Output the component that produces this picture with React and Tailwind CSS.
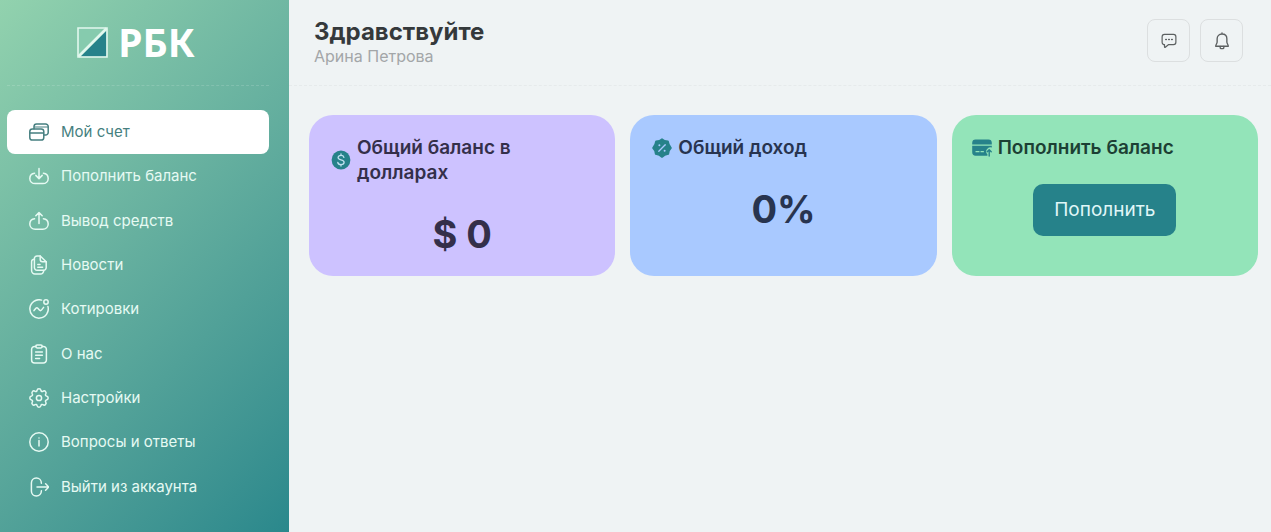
import React from "react";

function Icon({ children, className = "size-5" }) {
  return (
    <svg
      viewBox="0 0 20 20"
      fill="none"
      stroke="currentColor"
      strokeWidth="1.5"
      strokeLinecap="round"
      strokeLinejoin="round"
      aria-hidden="true"
      className={`${className} shrink-0`}
    >
      {children}
    </svg>
  );
}

const AccountIcon = () => (
  <Icon>
    <rect x="0.8" y="7" width="14" height="11" rx="2.6" />
    <path d="M1 11h13.400" />
    <path d="M5 6.800V4.600A2.600 2.600 0 0 1 7.600 2h9a2.600 2.600 0 0 1 2.600 2.600v5.800a2.600 2.600 0 0 1-2.600 2.600h-1.600" />
    <path d="M5.400 5h13.400" strokeWidth="1" />
  </Icon>
);

const TopUpIcon = () => (
  <Icon>
    <path d="M10 2.400v10M6.800 9.400l3.200 3.200 3.200-3.200" />
    <path d="M5.600 7.200a5.400 5.400 0 0 0-4.800 5.200c0 3 2.400 5.200 5.400 5.200h7.600c3 0 5.400-2.200 5.400-5.200a5.400 5.400 0 0 0-4.800-5.200" />
  </Icon>
);

const WithdrawIcon = () => (
  <Icon>
    <path d="M10 12.600V1.800M6.800 4.800 10 1.600l3.200 3.200" />
    <path d="M5.600 7.800a5.400 5.400 0 0 0-4.800 5.200c0 3 2.400 5.200 5.400 5.200h7.600c3 0 5.400-2.200 5.400-5.200a5.400 5.400 0 0 0-4.800-5.200" />
  </Icon>
);

const NewsIcon = () => (
  <Icon>
    <path d="M11.200 1H8a2.600 2.600 0 0 0-2.600 2.600v9A2.600 2.600 0 0 0 8 15.200h6.600a2.600 2.600 0 0 0 2.600-2.600V6.800z" />
    <path d="M11.200 1v3.600a2.200 2.200 0 0 0 2.200 2.200h3.800M8.800 9.400h2.200M8.800 12.200h4.800" />
    <path d="M5.400 4.200A2.600 2.600 0 0 0 2.600 6.800v8.800A3.400 3.400 0 0 0 6 19h5.400a3.400 3.400 0 0 0 3.300-3.600" />
  </Icon>
);

const QuotesIcon = () => (
  <Icon>
    <path d="M12.600 1.100A9.200 9.200 0 1 0 18.900 7.400" />
    <circle cx="17" cy="3" r="2.200" />
    <path d="m5 11.600 1.900-2.300c.6-.7 1.300-.7 1.900 0l1.600 1.800c.6.7 1.400.7 2 0l2.200-2.700" />
  </Icon>
);

const AboutIcon = () => (
  <Icon>
    <path d="M6.800 2.400H5.600a3 3 0 0 0-3 3V16a3 3 0 0 0 3 3h8.800a3 3 0 0 0 3-3V5.400a3 3 0 0 0-3-3h-1.200" />
    <rect x="6.800" y="0.900" width="6.400" height="3" rx="1.300" />
    <path d="M6.600 8h6.800M6.600 11.200h6.800M6.600 14.400h4" />
  </Icon>
);

const SettingsIcon = () => (
  <Icon>
    <circle cx="10" cy="10" r="2.600" />
    <path d="M8 2.500C8.200 1.300 9 .8 10 .8s1.800.5 2 1.700c.2 1 1 1.300 1.900.8 1-.7 1.900-.6 2.600.2.700.7.800 1.600.2 2.600-.6.900-.2 1.700.8 1.900 1.200.2 1.700 1 1.700 2s-.5 1.800-1.700 2c-1 .2-1.400 1-.8 1.900.6 1 .5 1.900-.2 2.600-.7.800-1.600.9-2.600.2-.9-.5-1.700-.2-1.900.8-.2 1.200-1 1.700-2 1.700s-1.800-.5-2-1.700c-.2-1-1-1.300-1.900-.8-1 .7-1.900.6-2.600-.2-.7-.7-.8-1.600-.2-2.600.6-.9.200-1.700-.8-1.900C1.300 11.800.8 11 .8 10s.5-1.800 1.700-2c1-.2 1.400-1 .8-1.900-.6-1-.5-1.900.2-2.600.7-.8 1.600-.9 2.600-.2.900.5 1.700.2 1.900-.8z" />
  </Icon>
);

const InfoIcon = () => (
  <Icon>
    <circle cx="10" cy="10" r="9.200" />
    <path d="M10 8.600V14M10 6v.1" />
  </Icon>
);

const LogoutIcon = () => (
  <Icon>
    <path d="M12.400 6.200C12.400 3.100 10.200 1 7.300 1 4.400 1 2.400 3.100 2.400 6v8c0 2.900 2 5 4.900 5 2.900 0 5.100-2.100 5.100-5.200" />
    <path d="M8 10h11.800M16.600 6.800 19.800 10l-3.200 3.200" />
  </Icon>
);

const DollarIcon = () => (
  <svg viewBox="0 0 20 20" fill="none" aria-hidden="true" className="size-5 shrink-0 text-[#26828a]">
    <circle cx="10" cy="10" r="9.400" fill="currentColor" />
    <path
      d="M12.900 7.300c-.3-1.200-1.400-1.900-2.900-1.900-1.700 0-2.900.9-2.900 2.200 0 1.400 1.200 1.900 2.900 2.300 1.800.4 3.100.9 3.100 2.400 0 1.400-1.300 2.300-3.100 2.300-1.700 0-2.900-.8-3.200-2.100M10 3.900v1.500M10 14.600v1.500"
      stroke="#bfe2f0"
      strokeWidth="1.300"
      strokeLinecap="round"
    />
  </svg>
);

const PercentIcon = () => (
  <svg viewBox="0 0 20 20" fill="none" aria-hidden="true" className="size-5 shrink-0 text-[#26828a]">
    <path
      d="M10 1.200 12.700 2.900l3.200.4.9 3.100L18.900 9.900l-2 2.800-.7 3.300-3.300.8L10 18.900l-2.900-2.100-3.300-.8-.7-3.300-2-2.800 2.100-3.500.9-3.100 3.200-.4z"
      fill="currentColor"
      stroke="currentColor"
      strokeWidth="1.800"
      strokeLinejoin="round"
    />
    <path d="m6.800 13.200 6.400-6.400" stroke="#a9c9ff" strokeWidth="1.300" strokeLinecap="round" />
    <circle cx="7.400" cy="7.200" r="1" fill="#a9c9ff" />
    <circle cx="12.600" cy="12.800" r="1" fill="#a9c9ff" />
  </svg>
);

const CardUpIcon = () => (
  <svg viewBox="0 0 20 20" fill="none" aria-hidden="true" className="size-5 shrink-0 text-[#26828a]">
    <path d="M3.600 1.400h12.800A3.400 3.400 0 0 1 19.800 4.800v1.600H.2V4.800a3.400 3.400 0 0 1 3.400-3.400z" fill="currentColor" />
    <path
      d="M.2 7.800h19.600v1.700a4.600 4.600 0 0 0-4.400 1.200c-1 1-1.600 2.600-1.200 3.900.2.800.8 1.200 1.200 1.400v1.700H3.600A3.400 3.400 0 0 1 .2 14.300z"
      fill="currentColor"
    />
    <path d="M4 13.700h3M9 13.700h2.400" stroke="#93e4b9" strokeWidth="1.200" strokeLinecap="round" />
    <path d="M17.200 18.100v-6M15.200 13.700l2-2 2 2" stroke="currentColor" strokeWidth="1.400" strokeLinecap="round" strokeLinejoin="round" />
  </svg>
);

const menu = [
  { label: "Мой счет", icon: AccountIcon, active: true },
  { label: "Пополнить баланс", icon: TopUpIcon },
  { label: "Вывод средств", icon: WithdrawIcon },
  { label: "Новости", icon: NewsIcon },
  { label: "Котировки", icon: QuotesIcon },
  { label: "О нас", icon: AboutIcon },
  { label: "Настройки", icon: SettingsIcon },
  { label: "Вопросы и ответы", icon: InfoIcon },
  { label: "Выйти из аккаунта", icon: LogoutIcon },
];

function Sidebar() {
  return (
    <aside className="flex w-[289px] shrink-0 flex-col bg-linear-135 from-[#92d2ae] to-[#2a888c] pr-5 pl-[7px]">
      <a
        href="#"
        className="flex h-[86px] items-center justify-center gap-2.5 border-b border-dashed border-white/15 pr-1 text-white"
      >
        <svg viewBox="0 0 31 31" aria-hidden="true" className="size-[31px] shrink-0">
          <path d="M1 1h29L1 30z" fill="#86cbae" />
          <path d="M3.500 29.500 29.500 3.500v26z" fill="#26828a" />
          <path d="M1 1h29v29H1z" fill="none" stroke="#e2f8ee" strokeWidth="1.600" />
          <path d="M1.500 29.500 29.500 1.500" stroke="#e2f8ee" strokeWidth="2.600" />
        </svg>
        <span className="pb-0.5 font-['Noto_Sans',sans-serif] text-[39px] leading-10 font-bold">РБК</span>
      </a>
      <nav className="mt-6">
        <ul className="grid h-[399px] auto-rows-fr">
          {menu.map(({ label, icon: ItemIcon, active }) => (
            <li key={label} className="grid">
              <a
                href="#"
                aria-current={active ? "page" : undefined}
                className={`flex items-center gap-3 rounded-lg pl-[22px] text-[15px] ${
                  active ? "bg-white text-[#467f80]" : "text-[#e6faf3]"
                }`}
              >
                <ItemIcon />
                {label}
              </a>
            </li>
          ))}
        </ul>
      </nav>
    </aside>
  );
}

function HeaderButton({ label, children }) {
  return (
    <button
      type="button"
      aria-label={label}
      className="flex size-[43px] items-center justify-center rounded-lg border border-[#dcdfe0] text-[#5c6061]"
    >
      {children}
    </button>
  );
}

function Header() {
  return (
    <header className="flex h-[86px] items-start justify-between border-b border-dashed border-[#e6eaeb] pt-[19px] pr-7 pl-[25px]">
      <div>
        <h1 className="text-2xl leading-[26px] font-bold text-[#35393b]">Здравствуйте</h1>
        <p className="text-base leading-[22px] text-[#a3a6a8]">Арина Петрова</p>
      </div>
      <div className="flex gap-2.5">
        <HeaderButton label="Сообщения">
          <Icon className="size-4">
            <path d="M4.400 1.800h11.200a3 3 0 0 1 3 3v6.800a3 3 0 0 1-3 3H9.200l-3.800 3.200c-.5.400-1 .1-1-.4v-2.800a3 3 0 0 1-3-3V4.800a3 3 0 0 1 3-3z" />
            <path d="M6 8.200h.6M9.700 8.200h.6M13.400 8.200h.6" strokeWidth="2" />
          </Icon>
        </HeaderButton>
        <HeaderButton label="Уведомления">
          <Icon className="size-[18px]">
            <path d="M10 2.200c-3.300 0-5.400 2.300-5.400 5.400v3.600c0 1.600-1.600 2.800-1.600 4.600h14c0-1.800-1.600-3-1.600-4.600V7.600c0-3.100-2.100-5.400-5.400-5.400zM10 .9v1.300" />
            <path d="M8 16v1.400c0 .6.500 1.100 1.100 1.100h1.800c.6 0 1.100-.5 1.100-1.100V16" />
          </Icon>
        </HeaderButton>
      </div>
    </header>
  );
}

export default function App() {
  return (
    <div className="flex min-h-screen bg-[#eff3f4] font-['Inter','Liberation_Sans',sans-serif]">
      <Sidebar />
      <div className="min-w-0 grow">
        <Header />
        <main className="grid grid-cols-3 gap-[15px] pt-[29px] pr-[13px] pl-5">
          <section className="rounded-3xl bg-[#cdc2ff] px-[22px] pt-5 pb-[17px] text-[#342f4a]">
            <div className="flex items-center gap-1.5">
              <DollarIcon />
              <h2 className="text-[19px] leading-[25px] font-semibold">Общий баланс в долларах</h2>
            </div>
            <p className="mt-6 text-center text-[38px] leading-[50px] font-bold">$ 0</p>
          </section>
          <section className="rounded-3xl bg-[#a9c9ff] px-[22px] pt-5 text-[#28344f]">
            <div className="flex items-center gap-1.5">
              <PercentIcon />
              <h2 className="text-[19px] leading-[25px] font-semibold">Общий доход</h2>
            </div>
            <p className="mt-6 text-center text-[38px] leading-[50px] font-bold">0%</p>
          </section>
          <section className="rounded-3xl bg-[#93e4b9] px-5 pt-5 text-[#1c4034]">
            <div className="flex items-center gap-1.5">
              <CardUpIcon />
              <h2 className="text-[19px] leading-[25px] font-semibold">Пополнить баланс</h2>
            </div>
            <div className="mt-6 flex justify-center">
              <button type="button" className="h-[52px] rounded-[10px] bg-[#26828a] px-[21px] text-[19px] text-[#e0f7f8]">
                Пополнить
              </button>
            </div>
          </section>
        </main>
      </div>
    </div>
  );
}
